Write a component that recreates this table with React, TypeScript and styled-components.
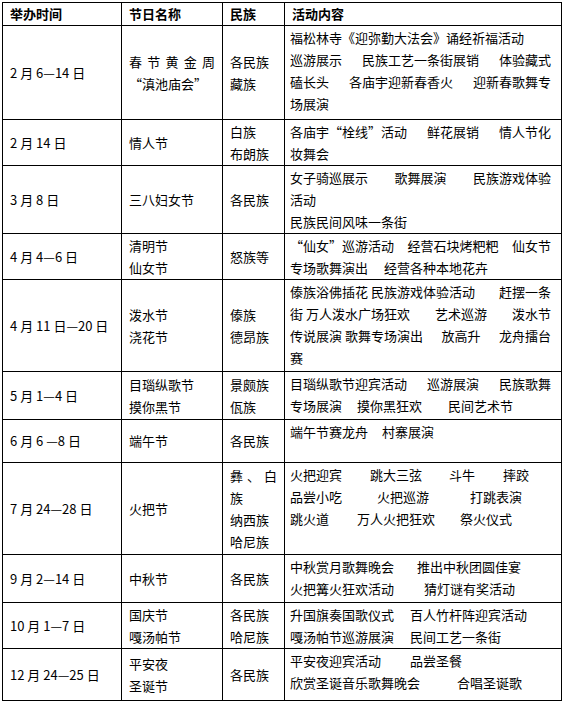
import React from 'react'
import styled, { createGlobalStyle } from 'styled-components'

const GlobalStyle = createGlobalStyle`
  body {
    margin: 0;
    padding: 2px;
    background: #fff;
    color: #000;
    font-family: "Noto Sans CJK SC", "Noto Sans", sans-serif;
  }
`

const Table = styled.table`
  border-collapse: collapse;
  table-layout: fixed;
  width: 559px;
  font-size: 13px;
  line-height: 22px;
`

const Row = styled.tr<{ $h: number }>`
  height: ${p => p.$h}px;
`

const HeadCell = styled.th`
  border: 1px solid #000;
  padding: 0 7px;
  text-align: left;
  font-weight: bold;
  vertical-align: middle;
`

const Cell = styled.td`
  border: 1px solid #000;
  padding: 0 7px;
  vertical-align: middle;
  overflow: hidden;
`

const Activity = styled(Cell)`
  padding: 1px 10px 0 5px;
  vertical-align: top;
`

const Line = styled.div<{ $spread?: boolean }>`
  display: flex;
  justify-content: ${p => (p.$spread ? 'space-between' : 'flex-start')};
  white-space: nowrap;
`

const Gap = styled.span<{ $w: number }>`
  display: inline-block;
  flex: none;
  width: ${p => p.$w}px;
`

type LineData = string | { parts: (string | number)[]; spread?: boolean }

type Festival = {
  h: number
  date: string
  name: LineData[]
  people: LineData[]
  acts: LineData[]
}

const festivals: Festival[] = [
  {
    h: 94,
    date: '2 月 6—14 日',
    name: [{ parts: ['春', '节', '黄', '金', '周'], spread: true }, '“滇池庙会”'],
    people: ['各民族', '藏族'],
    acts: [
      '福松林寺《迎弥勤大法会》诵经祈福活动',
      { parts: ['巡游展示', '民族工艺一条街展销', '体验藏式'], spread: true },
      { parts: ['磕长头', '各庙宇迎新春香火', '迎新春歌舞专'], spread: true },
      '场展演',
    ],
  },
  {
    h: 46,
    date: '2 月 14 日',
    name: ['情人节'],
    people: ['白族', '布朗族'],
    acts: [{ parts: ['各庙宇“栓线”活动', '鲜花展销', '情人节化'], spread: true }, '妆舞会'],
  },
  {
    h: 68,
    date: '3 月 8 日',
    name: ['三八妇女节'],
    people: ['各民族'],
    acts: [
      { parts: ['女子骑巡展示', '歌舞展演', '民族游戏体验'], spread: true },
      '活动',
      '民族民间风味一条街',
    ],
  },
  {
    h: 46,
    date: '4 月 4—6 日',
    name: ['清明节', '仙女节'],
    people: ['怒族等'],
    acts: [
      { parts: ['“仙女”巡游活动', '经营石块烤粑粑', '仙女节'], spread: true },
      { parts: ['专场歌舞演出', 16, '经营各种本地花卉'] },
    ],
  },
  {
    h: 92,
    date: '4 月 11 日—20 日',
    name: ['泼水节', '浇花节'],
    people: ['傣族', '德昂族'],
    acts: [
      { parts: ['傣族浴佛插花 民族游戏体验活动', '赶摆一条'], spread: true },
      { parts: ['街 万人泼水广场狂欢', '艺术巡游', '泼水节'], spread: true },
      { parts: ['传说展演 歌舞专场演出', '放高升', '龙舟擂台'], spread: true },
      '赛',
    ],
  },
  {
    h: 48,
    date: '5 月 1—4 日',
    name: ['目瑙纵歌节', '摸你黑节'],
    people: ['景颇族', '佤族'],
    acts: [
      { parts: ['目瑙纵歌节迎宾活动', '巡游展演', '民族歌舞'], spread: true },
      { parts: ['专场展演', 15, '摸你黑狂欢', 26, '民间艺术节'] },
    ],
  },
  {
    h: 43,
    date: '6 月 6 —8 日',
    name: ['端午节'],
    people: ['各民族'],
    acts: [{ parts: ['端午节赛龙舟', 14, '村寨展演'] }],
  },
  {
    h: 92,
    date: '7 月 24—28 日',
    name: ['火把节'],
    people: [{ parts: ['彝', '、', '白'], spread: true }, '族', '纳西族', '哈尼族'],
    acts: [
      { parts: ['火把迎宾', 28, '跳大三弦', 27, '斗牛', 28, '摔跤'] },
      { parts: ['品尝小吃', 35, '火把巡游', 41, '打跳表演'] },
      { parts: ['跳火道', 28, '万人火把狂欢', 25, '祭火仪式'] },
    ],
  },
  {
    h: 48,
    date: '9 月 2—14 日',
    name: ['中秋节'],
    people: ['各民族'],
    acts: [
      { parts: ['中秋赏月歌舞晚会', 23, '推出中秋团圆佳宴'] },
      { parts: ['火把篝火狂欢活动', 30, '猜灯谜有奖活动'] },
    ],
  },
  {
    h: 45,
    date: '10 月 1—7 日',
    name: ['国庆节', '嘎汤帕节'],
    people: ['各民族', '哈尼族'],
    acts: [
      { parts: ['升国旗奏国歌仪式', 16, '百人竹杆阵迎宾活动'] },
      { parts: ['嘎汤帕节巡游展演', 16, '民间工艺一条街'] },
    ],
  },
  {
    h: 52,
    date: '12 月 24—25 日',
    name: ['平安夜', '圣诞节'],
    people: ['各民族'],
    acts: [
      { parts: ['平安夜迎宾活动', 29, '品尝圣餐'] },
      { parts: ['欣赏圣诞音乐歌舞晚会', 37, '合唱圣诞歌'] },
    ],
  },
]

const Lines = ({ lines }: { lines: LineData[] }) => (
  <>
    {lines.map((l, i) =>
      typeof l === 'string' ? (
        <Line key={i}>{l}</Line>
      ) : (
        <Line key={i} $spread={l.spread}>
          {l.parts.map((p, j) =>
            typeof p === 'number' ? <Gap key={j} $w={p} /> : <span key={j}>{p}</span>
          )}
        </Line>
      )
    )}
  </>
)

export default function App() {
  return (
    <>
      <GlobalStyle />
      <Table>
        <colgroup>
          <col style={{ width: 119 }} />
          <col style={{ width: 101 }} />
          <col style={{ width: 62 }} />
          <col style={{ width: 277 }} />
        </colgroup>
        <thead>
          <Row $h={22}>
            <HeadCell>举办时间</HeadCell>
            <HeadCell>节日名称</HeadCell>
            <HeadCell>民族</HeadCell>
            <HeadCell>活动内容</HeadCell>
          </Row>
        </thead>
        <tbody>
          {festivals.map((f, i) => (
            <Row key={i} $h={f.h}>
              <Cell>{f.date}</Cell>
              <Cell>
                <Lines lines={f.name} />
              </Cell>
              <Cell>
                <Lines lines={f.people} />
              </Cell>
              <Activity>
                <Lines lines={f.acts} />
              </Activity>
            </Row>
          ))}
        </tbody>
      </Table>
    </>
  )
}
